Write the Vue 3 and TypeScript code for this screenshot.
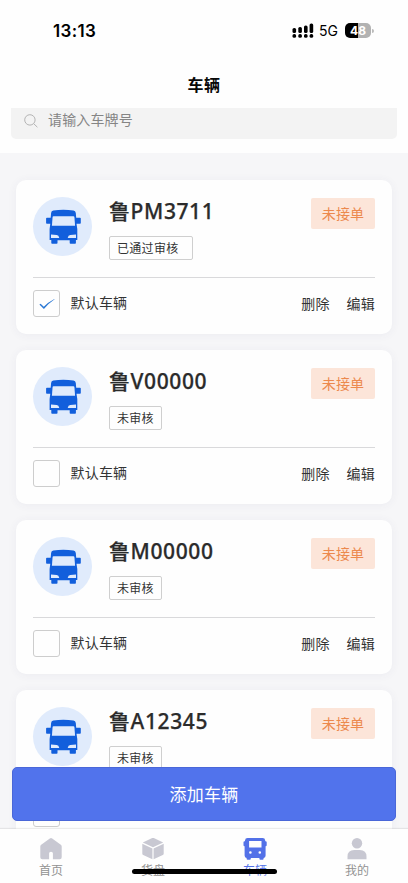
<script setup lang="ts">
import { ref } from 'vue'

interface Vehicle {
  plate: string
  audit: string
  approved: boolean
  isDefault: boolean
}

const vehicles = ref<Vehicle[]>([
  { plate: 'PM3711', audit: '已通过审核', approved: true, isDefault: true },
  { plate: 'V00000', audit: '未审核', approved: false, isDefault: false },
  { plate: 'M00000', audit: '未审核', approved: false, isDefault: false },
  { plate: 'A12345', audit: '未审核', approved: false, isDefault: false },
])

const tabs = [
  { key: 'home', label: '首页' },
  { key: 'cargo', label: '货盘' },
  { key: 'vehicle', label: '车辆' },
  { key: 'mine', label: '我的' },
]
const activeTab = ref('vehicle')

function setDefault(index: number) {
  vehicles.value.forEach((v, i) => (v.isDefault = i === index))
}
</script>

<template>
  <div class="screen">
    <header class="status-bar">
      <span class="time">13:13</span>
      <div class="indicators">
        <svg class="signal" viewBox="0 0 22 16" width="22" height="16">
          <g fill="#000">
            <rect x="0.5" y="5" width="3.6" height="5" rx="1.6" />
            <rect x="6.3" y="4" width="3.6" height="6" rx="1.6" />
            <rect x="12" y="2.5" width="3.6" height="7.5" rx="1.6" />
            <rect x="17.6" y="0.5" width="3.6" height="9.5" rx="1.6" />
            <rect x="0.5" y="11" width="3.6" height="3.8" rx="1.6" />
            <rect x="6.3" y="11" width="3.6" height="3.8" rx="1.6" />
            <rect x="12" y="11" width="3.6" height="3.8" rx="1.6" />
            <rect x="17.6" y="11" width="3.6" height="3.8" rx="1.6" />
          </g>
        </svg>
        <span class="network">5G</span>
        <span class="battery">48</span>
        <span class="battery-cap"></span>
      </div>
    </header>

    <h1 class="title">车辆</h1>

    <div class="search-wrap">
      <div class="search">
        <svg viewBox="0 0 14 14" width="14" height="14" fill="none" stroke="#b4b4b4" stroke-width="1">
          <circle cx="5.9" cy="5.9" r="5.2" />
          <path d="M9.7 9.7 13.4 13.2" />
        </svg>
        <span>请输入车牌号</span>
      </div>
    </div>

    <main class="list">
      <article v-for="(v, i) in vehicles" :key="v.plate" class="card">
        <div class="summary">
          <div class="avatar">
            <svg viewBox="-0.3 0 36 36" width="36" height="36">
              <path
                fill="#125fdc"
                d="M8 1.6Q18 .1 28.2 1.6Q30.2 1.9 30.5 4L30.9 8.8H34.7Q35.5 8.8 35.5 9.6V14Q35.5 14.8 34.7 14.8H31.2L32 20V30.9H30.6V34Q30.6 34.8 29.8 34.8H25.2Q24.4 34.8 24.4 34V31.2H12.2V34Q12.2 34.8 11.4 34.8H6.8Q6 34.8 6 34V30.9H4.3V20L5 14.8H1.6Q.8 14.8 .8 14V9.6Q.8 8.8 1.6 8.8H5.4L5.8 4Q6 1.9 8 1.6Z"
              />
              <path fill="#e0ebfc" d="M8.2 7.2H28.2Q29 7.2 29.1 8L29.8 16.7H6.6L7.3 8Q7.4 7.2 8.2 7.2Z" />
              <path
                fill="#e0ebfc"
                d="M5.7 25.6 11.4 26Q13.5 26.2 14 28.9H5.7ZM30.7 25.6 25 26Q22.9 26.2 22.4 28.9H30.7Z"
              />
            </svg>
          </div>
          <div class="info">
            <div class="plate"><span class="province">鲁</span>{{ v.plate }}</div>
            <span class="audit" :class="{ approved: v.approved }">{{ v.audit }}</span>
          </div>
          <span class="order-state">未接单</span>
        </div>
        <div class="actions">
          <button class="check" type="button" @click="setDefault(i)">
            <svg v-if="v.isDefault" viewBox="0 0 16 12" width="16" height="12">
              <path fill="#2b78d4" d="M.4 6.6 1.6 5.8 4.8 8.7Q9.2 4 15.4.9L15.6 1.3Q9.6 5.4 4.9 10.9Z" />
            </svg>
          </button>
          <span class="default-label">默认车辆</span>
          <span class="link">删除</span>
          <span class="link">编辑</span>
        </div>
      </article>
    </main>

    <div class="add-wrap">
      <button class="add" type="button">添加车辆</button>
    </div>

    <nav class="tabs">
      <div
        v-for="tab in tabs"
        :key="tab.key"
        class="tab"
        :class="{ active: tab.key === activeTab }"
        @click="activeTab = tab.key"
      >
        <svg v-if="tab.key === 'home'" viewBox="0 0 24 24" width="24" height="24">
          <path
            fill="currentColor"
            d="M10.8 1.5Q12 .6 13.2 1.5L21.8 7.8Q22.7 8.5 22.7 9.4V20.2Q22.7 22.2 20.7 22.2H13.9V16.2Q13.9 14.7 12 14.7T10.1 16.2V22.2H3.3Q1.3 22.2 1.3 20.2V9.4Q1.3 8.5 2.2 7.8Z"
          />
        </svg>
        <svg v-else-if="tab.key === 'cargo'" viewBox="0 0 24 24" width="24" height="24">
          <g fill="currentColor">
            <path d="M11.2 1.1Q12 .7 12.8 1.1L22.2 5.5 12 10.2 1.8 5.5Z" />
            <path d="M1.3 6.8 11.4 11.4V22.3L2.2 18.1Q1.3 17.7 1.3 16.7Z" />
            <path d="M22.7 6.8 12.6 11.4V22.3L21.8 18.1Q22.7 17.7 22.7 16.7Z" />
          </g>
        </svg>
        <svg v-else-if="tab.key === 'vehicle'" viewBox="0 0 24 24" width="24" height="24">
          <path
            fill="currentColor"
            fill-rule="evenodd"
            d="M4.6 1H19.6Q22 1 22.2 3.4L22.3 4.2H22.6Q23.7 4.2 23.7 5.3V8.2Q23.7 9.3 22.6 9.3V18.6Q22.6 20.8 20.6 21V21.8Q20.6 22.8 19.6 22.8H17.4Q16.4 22.8 16.4 21.8V21H7.8V21.8Q7.8 22.8 6.8 22.8H4.6Q3.6 22.8 3.6 21.8V21Q1.6 20.8 1.6 18.6V9.3Q.5 9.3 .5 8.2V5.3Q.5 4.2 1.6 4.2H1.9L2 3.4Q2.2 1 4.6 1ZM6.1 4.1V10.4H18.5V4.1ZM7.4 14.2A1.3 1.3 0 1 0 7.4 16.8 1.3 1.3 0 1 0 7.4 14.2ZM16.8 14.2A1.3 1.3 0 1 0 16.8 16.8 1.3 1.3 0 1 0 16.8 14.2Z"
          />
        </svg>
        <svg v-else viewBox="0 0 24 24" width="24" height="24">
          <circle cx="12" cy="6.2" r="5.2" fill="currentColor" />
          <path fill="currentColor" d="M2.5 22.2V19.6Q2.5 13 9.2 13H14.8Q21.5 13 21.5 19.6V22.2Z" />
        </svg>
        <span>{{ tab.label }}</span>
      </div>
      <i class="home-indicator"></i>
    </nav>
  </div>
</template>

<style>
body {
  margin: 0;
  overflow: hidden;
}
</style>

<style scoped>
.screen {
  display: flex;
  flex-direction: column;
  position: relative;
  width: 408px;
  height: 883px;
  overflow: hidden;
  background: #f6f6f8;
  color: #333;
  font-family: 'Noto Sans', 'Noto Sans CJK SC', sans-serif;
}
.screen * {
  box-sizing: border-box;
}
button {
  padding: 0;
  font-family: inherit;
}
.status-bar {
  flex: none;
  display: flex;
  justify-content: space-between;
  align-items: center;
  height: 61px;
  padding: 0 34px 0 53px;
  background: #fefefe;
}
.time {
  font: 600 17px/20px Inter, sans-serif;
  letter-spacing: 0.35px;
  color: #000;
}
.indicators {
  display: flex;
  align-items: center;
}
.signal {
  margin-right: 5px;
}
.network {
  width: 26px;
  font: 400 14px/18px Inter, sans-serif;
  color: #000;
}
.battery {
  width: 26px;
  height: 15px;
  border-radius: 5px;
  background: linear-gradient(90deg, #000 50%, #b2b2b2 50%);
  font: 700 12px/15px Inter, sans-serif;
  text-align: center;
  color: #fff;
}
.battery-cap {
  width: 2px;
  height: 4px;
  margin-left: 1px;
  border-radius: 0 2px 2px 0;
  background: #bbb;
}
.title {
  flex: none;
  height: 47px;
  margin: 0;
  background: #fefefe;
  font: 700 16px/46px 'Noto Sans CJK SC', sans-serif;
  letter-spacing: 0.5px;
  text-align: center;
  color: #080808;
}
.search-wrap {
  flex: none;
  height: 45px;
  padding: 0 11px;
  background: #fefefe;
}
.search {
  display: flex;
  align-items: center;
  gap: 10px;
  height: 31px;
  padding: 0 13px 8px;
  border-radius: 0 0 5px 5px;
  background: #f3f3f3;
  font: 400 14px/20px 'Noto Sans CJK SC', sans-serif;
  letter-spacing: 0.15px;
  color: #858585;
}
.search svg {
  margin-top: 3px;
}
.search span {
  margin-bottom: 1px;
}
.list {
  flex: 1;
  min-height: 0;
  display: flex;
  flex-direction: column;
  gap: 16px;
  padding: 27px 16px 0;
  overflow: hidden;
}
.card {
  flex: none;
  height: 154px;
  padding: 0 17px;
  border-radius: 10px;
  background: #fefefe;
  box-shadow: 0 1px 10px rgba(60, 60, 120, 0.06);
}
.summary {
  display: flex;
  align-items: flex-start;
  height: 98px;
  padding-top: 17px;
  border-bottom: 1px solid #d9d9db;
}
.avatar {
  display: flex;
  align-items: center;
  justify-content: center;
  width: 59px;
  height: 59px;
  border-radius: 50%;
  background: #e0ebfc;
}
.info {
  flex: 1;
  display: flex;
  flex-direction: column;
  align-items: flex-start;
  padding-left: 17px;
}
.plate {
  height: 39px;
  font-size: 21px;
  font-weight: 500;
  line-height: 27px;
  letter-spacing: 0.6px;
  white-space: nowrap;
  color: #2b2b2b;
  -webkit-text-stroke: 0.25px #2b2b2b;
}
.province {
  font-family: 'Noto Sans CJK SC', sans-serif;
  font-weight: 500;
}
.audit {
  height: 24px;
  padding: 0 7px;
  border: 1px solid #cfcfcf;
  border-radius: 2px;
  font: 400 12px/22px 'Noto Sans CJK SC', sans-serif;
  letter-spacing: 0.3px;
}
.audit.approved {
  padding-right: 13px;
}
.order-state {
  width: 64px;
  height: 31px;
  margin-top: 1px;
  border-radius: 2px;
  background: #fce5d9;
  font: 400 14px/31px 'Noto Sans CJK SC', sans-serif;
  letter-spacing: 0.2px;
  text-align: center;
  color: #ec894d;
}
.actions {
  display: flex;
  align-items: flex-start;
  padding-top: 12px;
  font: 400 14px/27px 'Noto Sans CJK SC', sans-serif;
  letter-spacing: 0.2px;
}
.check {
  display: flex;
  align-items: center;
  justify-content: center;
  width: 27px;
  height: 27px;
  border: 1px solid #cdcdcd;
  border-radius: 3px;
  background: #fefefe;
}
.default-label {
  flex: 1;
  padding-left: 10.5px;
  line-height: 25px;
}
.link {
  margin-left: 17px;
}
.add-wrap {
  position: absolute;
  left: 12px;
  right: 12px;
  bottom: 62px;
}
.add {
  width: 100%;
  height: 54px;
  border: 1px solid #4a67d8;
  border-radius: 5px;
  background: #5173ec;
  font: 400 17px/52px 'Noto Sans CJK SC', sans-serif;
  letter-spacing: 0.2px;
  color: #fff;
}
.tabs {
  flex: none;
  position: relative;
  display: flex;
  height: 54px;
  background: #fefefe;
  box-shadow: 0 -1px 1px rgba(0, 0, 0, 0.07);
}
.tab {
  flex: 1;
  display: flex;
  flex-direction: column;
  align-items: center;
  padding-top: 8px;
  color: #c8c8d2;
}
.tab span {
  height: 18px;
  font: 400 12px/18px 'Noto Sans CJK SC', sans-serif;
  color: #929292;
}
.tab.active,
.tab.active span {
  color: #5371e8;
}
.home-indicator {
  position: absolute;
  left: 132px;
  bottom: 9px;
  width: 145px;
  height: 5px;
  border-radius: 3px;
  background: #000;
}
</style>
